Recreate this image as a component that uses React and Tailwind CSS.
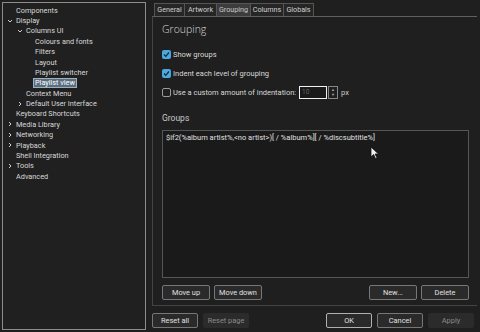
import React from "react";

const font = { fontFamily: 'Roboto, "Liberation Sans", Arial, sans-serif' };

function Chevron({ open }) {
  return (
    <svg width="6" height="6" viewBox="0 0 6 6" className="shrink-0">
      {open ? (
        <path d="M1 2 L3 4 L5 2" fill="none" stroke="#d0d0d0" strokeWidth="1" />
      ) : (
        <path d="M2 1 L4 3 L2 5" fill="none" stroke="#d0d0d0" strokeWidth="1" />
      )}
    </svg>
  );
}

const tree = [
  { t: "Components", l: 0 },
  { t: "Display", l: 0, a: "open" },
  { t: "Columns UI", l: 1, a: "open" },
  { t: "Colours and fonts", l: 2 },
  { t: "Filters", l: 2 },
  { t: "Layout", l: 2 },
  { t: "Playlist switcher", l: 2 },
  { t: "Playlist view", l: 2, sel: true },
  { t: "Context Menu", l: 1 },
  { t: "Default User Interface", l: 1, a: "closed" },
  { t: "Keyboard Shortcuts", l: 0 },
  { t: "Media Library", l: 0, a: "closed" },
  { t: "Networking", l: 0, a: "closed" },
  { t: "Playback", l: 0, a: "closed" },
  { t: "Shell Integration", l: 0 },
  { t: "Tools", l: 0, a: "closed" },
  { t: "Advanced", l: 0 },
];

const indent = ["pl-[4px]", "pl-[14px]", "pl-[23px]"];

function Check({ checked }) {
  return checked ? (
    <div className="w-[9px] h-[9px] rounded-[2px] bg-[#4aa8de] flex items-center justify-center shrink-0">
      <svg width="7" height="7" viewBox="0 0 7 7">
        <path d="M1 3.5 L2.8 5.3 L6 1.5" fill="none" stroke="#10293a" strokeWidth="1.2" />
      </svg>
    </div>
  ) : (
    <div className="w-[9px] h-[9px] rounded-[2px] border border-[#9a9a9a] shrink-0" />
  );
}

function Btn({ children, w = "w-[48px]", disabled, strong }) {
  return (
    <div
      className={`${w} h-[15px] rounded-[2px] flex items-center justify-center text-[7.4px] leading-none ${
        disabled
          ? "bg-[#2b2b2b] text-[#8a8a8a]"
          : strong
          ? "bg-[#2a2a2a] border border-[#b0b0b0] text-[#e0e0e0]"
          : "bg-[#2a2a2a] border border-[#777] text-[#e0e0e0]"
      }`}
    >
      {children}
    </div>
  );
}

const tabs = [
  ["General", "w-[31px]"],
  ["Artwork", "w-[33px]"],
  ["Grouping", "w-[35px]"],
  ["Columns", "w-[34px]"],
  ["Globals", "w-[31px]"],
];

export default function App() {
  return (
    <div
      className="w-[480px] h-[332px] bg-[#1f1f1f] text-[#d8d8d8] flex overflow-hidden"
      style={font}
    >
      {/* tree */}
      <div className="ml-[2px] mt-[2px] mb-[2px] w-[144px] border border-[#8c8c8c] bg-[#202020] pt-[2px]">
        {tree.map((n, i) => (
          <div
            key={i}
            className={`h-[10.4px] flex items-center ${indent[n.l]} text-[7.3px] leading-none whitespace-nowrap`}
          >
            <div className="w-[9px] flex items-center">
              {n.a && <Chevron open={n.a === "open"} />}
            </div>
            {n.sel ? (
              <span className="bg-[#5b6e80] border border-[#9db0c0] px-[1px] text-white leading-[8px] -ml-[2px]">
                {n.t}
              </span>
            ) : (
              <span>{n.t}</span>
            )}
          </div>
        ))}
      </div>

      {/* right */}
      <div className="ml-[6px] w-[325px] flex flex-col">
        <div className="flex mt-[3px] h-[13px] text-[7.2px] leading-none pl-[2px]">
          {tabs.map(([t, w]) => (
            <div
              key={t}
              className={`${w} flex items-center justify-center border border-b-0 border-[#555] -mr-px whitespace-nowrap ${
                t === "Grouping" ? "bg-[#3c3c3c] text-[#c8c8c8]" : "bg-[#262626] text-[#d0d0d0]"
              }`}
            >
              {t}
            </div>
          ))}
        </div>
        <div className="h-[290px] border border-[#444] border-t-[#5e5e5e] border-r-0 flex flex-col pl-[9px] pr-[8px]">
          <div className="mt-[7px] text-[10.5px] text-[#d8d8d8] leading-none" style={{ fontFamily: '"Open Sans", sans-serif', fontWeight: 300 }}>Grouping</div>
          <div className="mt-[15px] flex items-center gap-[2px] text-[7.5px] h-[10px] whitespace-nowrap">
            <Check checked />
            <span>Show groups</span>
          </div>
          <div className="mt-[9px] flex items-center gap-[2px] text-[7.5px] h-[10px] whitespace-nowrap">
            <Check checked />
            <span>Indent each level of grouping</span>
          </div>
          <div className="mt-[7px] flex items-center text-[7.5px] h-[14px] whitespace-nowrap">
            <Check />
            <span className="ml-[2px] w-[126px]">Use a custom amount of indentation:</span>
            <div className="w-[28px] h-[13px] border border-[#f0f0f0] bg-[#1a1a1a] text-[6.5px] text-[#666] flex items-center pl-[2px]">
              10
            </div>
            <div className="ml-px w-[10px] h-[13px] border border-[#888] flex flex-col items-center justify-around text-[4px] text-[#aaa] leading-none">
              <span>▲</span>
              <span>▼</span>
            </div>
            <span className="ml-[3px] text-[#ccc]">px</span>
          </div>
          <div className="mt-[14px] text-[8.5px] text-[#c8c8c8] leading-none">Groups</div>
          <div className="mt-[8px] h-[148px] border border-[#555] bg-[#1a1a1a] relative px-[3px] pt-[3px] text-[7.5px] text-[#e0e0e0] leading-none whitespace-nowrap">
            $if2(%album artist%,&lt;no artist&gt;)[ / %album%][ / %discsubtitle%]
            <svg className="absolute left-[207px] top-[15px]" width="9" height="13" viewBox="0 0 9 13">
              <path d="M1 1 L1 11 L3.5 8.5 L5.5 12.5 L7 11.8 L5 8 L8.5 8 Z" fill="#f0f0f0" stroke="#111" strokeWidth="0.8" />
            </svg>
          </div>
          <div className="mt-[7px] flex items-center">
            <Btn>Move up</Btn>
            <div className="ml-[4px]"><Btn>Move down</Btn></div>
            <div className="ml-auto"><Btn>New...</Btn></div>
            <div className="ml-[4px]"><Btn>Delete</Btn></div>
          </div>
        </div>
        <div className="mt-[7px] flex items-center">
          <Btn w="w-[46px]">Reset all</Btn>
          <div className="ml-[5px]"><Btn w="w-[46px]" disabled>Reset page</Btn></div>
          <div className="ml-auto"><Btn w="w-[46px]" strong>OK</Btn></div>
          <div className="ml-[5px]"><Btn w="w-[46px]">Cancel</Btn></div>
          <div className="ml-[5px] mr-[3px]"><Btn w="w-[46px]" disabled>Apply</Btn></div>
        </div>
      </div>
    </div>
  );
}
